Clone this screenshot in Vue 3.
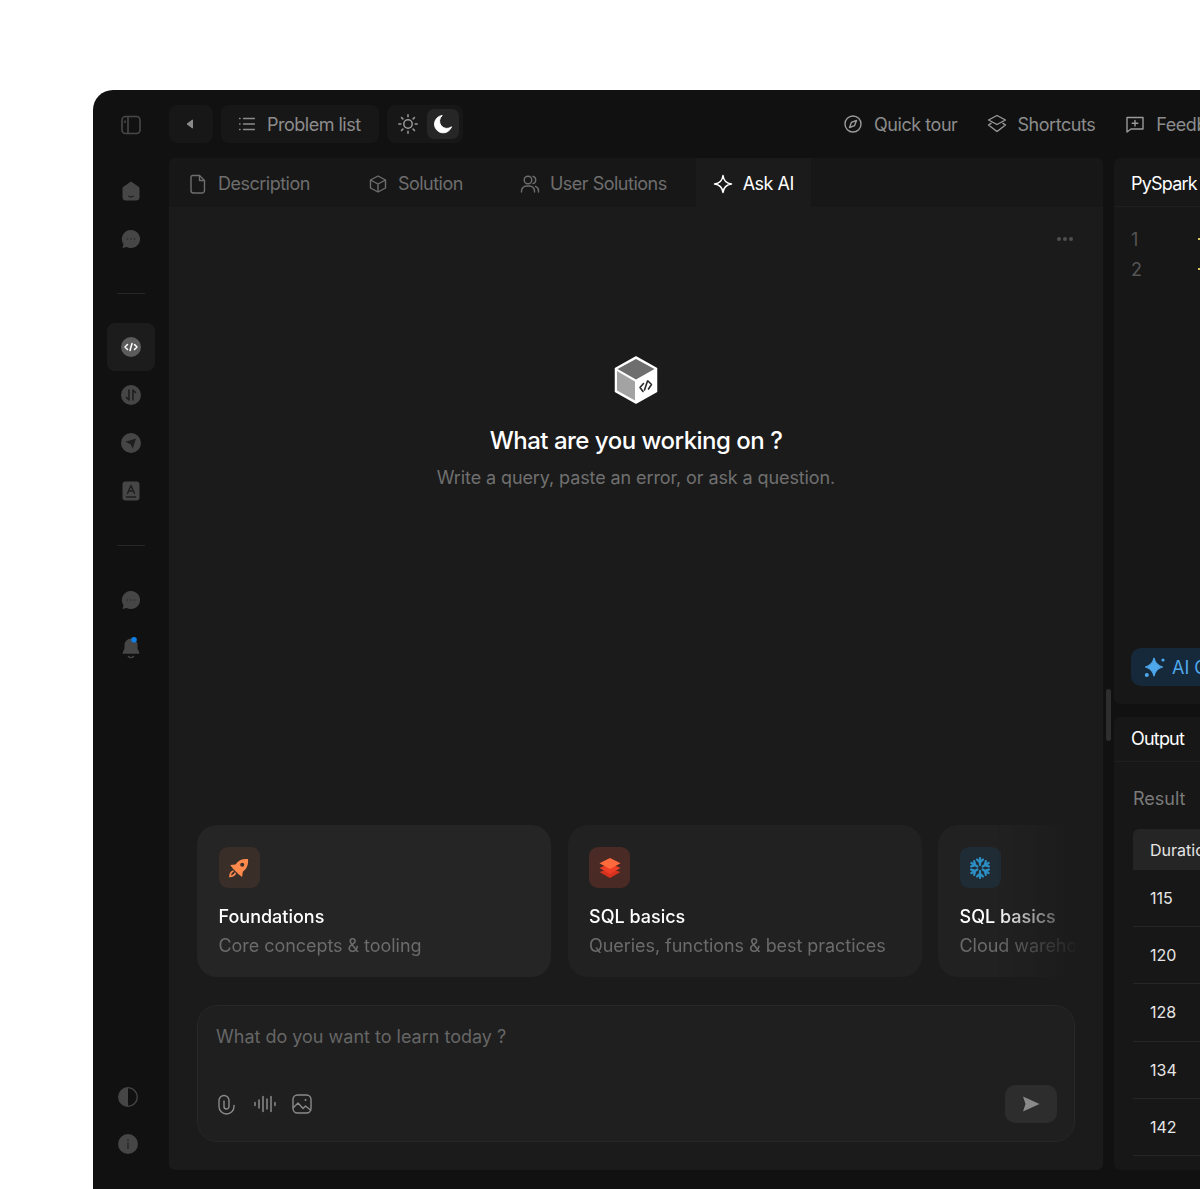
<template>
  <div class="page">
    <div class="shell">
      <!-- left rail -->
      <aside class="rail">
        <svg class="rail-toggle" width="24" height="24" viewBox="0 0 24 24" fill="none" stroke="#484848" stroke-width="1.6">
          <rect x="3" y="3.500" width="18" height="17" rx="3.500" />
          <path d="M9 3.500v17" />
          <path d="M6 7.500v2.500" />
        </svg>

        <div class="rail-group first">
          <button class="rail-btn">
            <svg width="24" height="24" viewBox="0 0 24 24">
              <path d="M12 2.500 19.600 7.800c.6.400.9 1 .9 1.700V18a3.500 3.500 0 0 1-3.500 3.500H7A3.500 3.500 0 0 1 3.500 18V9.500c0-.7.300-1.300.9-1.700Z" fill="#464646" />
              <path d="M9.800 17.200c1.300.8 3.100.8 4.400 0" fill="none" stroke="#1c1c1c" stroke-width="1.200" stroke-linecap="round" />
            </svg>
          </button>
          <button class="rail-btn">
            <svg width="24" height="24" viewBox="0 0 24 24">
              <path d="M12 3a9 9 0 1 1-4.300 16.900L3.500 21l1-3.900A9 9 0 0 1 12 3Z" fill="#464646" />
              <circle cx="8.500" cy="12" r=".8" fill="#2b2b2b" /><circle cx="12" cy="12" r=".8" fill="#2b2b2b" /><circle cx="15.500" cy="12" r=".8" fill="#2b2b2b" />
            </svg>
          </button>
        </div>

        <div class="rail-line top"></div>

        <div class="rail-group">
          <button class="rail-btn active">
            <svg width="24" height="24" viewBox="0 0 24 24">
              <circle cx="12" cy="12" r="10" fill="#5c5c5c" />
              <path d="M8.500 9.500 6 12l2.500 2.500M15.500 9.500 18 12l-2.500 2.500M13 8.500l-2 7" fill="none" stroke="#fff" stroke-width="1.500" stroke-linecap="round" stroke-linejoin="round" />
            </svg>
          </button>
          <button class="rail-btn">
            <svg width="24" height="24" viewBox="0 0 24 24">
              <circle cx="12" cy="12" r="10" fill="#464646" />
              <path d="M10 7v10l-2.500-2.500M14 17V7l2.500 2.500" fill="none" stroke="#1e1e1e" stroke-width="1.600" stroke-linecap="round" stroke-linejoin="round" />
            </svg>
          </button>
          <button class="rail-btn">
            <svg width="24" height="24" viewBox="0 0 24 24">
              <circle cx="12" cy="12" r="10" fill="#464646" />
              <path d="M6.500 10.800 17 7.500l-3.200 10.300-2.300-4.600Z" fill="#1e1e1e" />
            </svg>
          </button>
          <button class="rail-btn">
            <svg width="24" height="24" viewBox="0 0 24 24">
              <rect x="3.500" y="2.500" width="17" height="19" rx="3" fill="#464646" />
              <path d="M8.500 14.500 12 6.500l3.500 8M9.800 12h4.400M7.500 18h9" fill="none" stroke="#1e1e1e" stroke-width="1.400" stroke-linecap="round" stroke-linejoin="round" />
            </svg>
          </button>
        </div>

        <div class="rail-line bottom"></div>

        <div class="rail-group">
          <button class="rail-btn">
            <svg width="24" height="24" viewBox="0 0 24 24">
              <path d="M12 3a9 9 0 1 1-4.300 16.900L3.500 21l1-3.900A9 9 0 0 1 12 3Z" fill="#464646" />
              <circle cx="8.500" cy="12" r=".8" fill="#2b2b2b" /><circle cx="12" cy="12" r=".8" fill="#2b2b2b" /><circle cx="15.500" cy="12" r=".8" fill="#2b2b2b" />
            </svg>
          </button>
          <button class="rail-btn">
            <svg width="24" height="24" viewBox="0 0 24 24">
              <path d="M12 2.500a6.500 6.500 0 0 1 6.500 6.500v3.500l1.800 4c.3.700-.1 1.300-.8 1.300h-15c-.7 0-1.100-.6-.8-1.300l1.800-4V9A6.500 6.500 0 0 1 12 2.500Z" fill="#464646" />
              <path d="M9.500 20.500c1.300 1.300 3.700 1.300 5 0" fill="none" stroke="#464646" stroke-width="1.600" stroke-linecap="round" />
              <circle cx="15" cy="3.800" r="2.800" fill="#0f7fe6" />
            </svg>
          </button>
        </div>

        <div class="rail-foot">
          <svg width="22" height="22" viewBox="0 0 22 22">
            <circle cx="11" cy="11" r="9.300" fill="none" stroke="#464646" stroke-width="1.300" />
            <path d="M11 1.700a9.300 9.300 0 0 0 0 18.600Z" fill="#464646" />
          </svg>
          <svg width="22" height="22" viewBox="0 0 22 22">
            <circle cx="11" cy="11" r="10" fill="#464646" />
            <path d="M11 10v5.500" stroke="#262626" stroke-width="1.300" stroke-linecap="round" />
            <circle cx="11" cy="7.200" r=".9" fill="#262626" />
          </svg>
        </div>
      </aside>

      <div class="main">
        <!-- top bar -->
        <header class="topbar">
          <button class="bar-btn back">
            <svg width="10" height="12" viewBox="0 0 10 12"><path d="M7.500 2v8L2 6Z" fill="#8a8a8a" stroke="#8a8a8a" stroke-linejoin="round" /></svg>
          </button>
          <button class="bar-btn list">
            <svg width="20" height="20" viewBox="0 0 20 20" fill="none" stroke="#8a8a8a" stroke-width="1.300" stroke-linecap="round">
              <path d="M6.500 4.500h11M6.500 10h11M6.500 15.500h11M2.500 4.500h.6M2.500 10h.6M2.500 15.500h.6" />
            </svg>
            <span>Problem list</span>
          </button>
          <div class="theme">
            <span class="theme-opt">
              <svg width="22" height="22" viewBox="0 0 22 22" fill="none" stroke="#9a9a9a" stroke-width="1.500" stroke-linecap="round">
                <circle cx="11" cy="11" r="4.200" />
                <path d="M11 1.800v2M11 18.200v2M1.800 11h2M18.200 11h2M4.500 4.500l1.400 1.400M16.100 16.100l1.400 1.400M17.500 4.500l-1.400 1.400M5.900 16.100l-1.400 1.400" />
              </svg>
            </span>
            <span class="theme-opt on">
              <svg width="22" height="22" viewBox="0 0 22 22">
                <path d="M10.200 2.500a8.700 8.700 0 1 0 9.300 11.300 7.300 7.300 0 0 1-9.300-11.300Z" fill="#fff" stroke="#fff" stroke-linejoin="round" />
              </svg>
            </span>
          </div>
          <nav class="links">
            <a>
              <svg width="20" height="20" viewBox="0 0 20 20" fill="none" stroke="#9a9a9a" stroke-width="1.400" stroke-linejoin="round">
                <circle cx="10" cy="10" r="8" />
                <path d="M13.500 6.500 11.600 11.600 6.500 13.500 8.400 8.400Z" />
              </svg>
              Quick tour
            </a>
            <a class="shortcuts">
              <svg width="20" height="20" viewBox="0 0 20 20" fill="none" stroke="#9a9a9a" stroke-width="1.400" stroke-linejoin="round" stroke-linecap="round">
                <path d="M10 1.500 18.500 6 10 10.500 1.500 6Z" />
                <path d="M4 9.300 1.500 11 10 17.500 18.500 11 16 9.300" />
              </svg>
              Shortcuts
            </a>
            <a>
              <svg width="20" height="20" viewBox="0 0 20 20" fill="none" stroke="#9a9a9a" stroke-width="1.400" stroke-linejoin="round" stroke-linecap="round">
                <path d="M2 3.500h16v11.500H6L2 18Z" />
                <path d="M10 6.500v5.500M7.200 9.200h5.600" />
              </svg>
              Feedback
            </a>
          </nav>
        </header>

        <div class="panels">
          <!-- ask ai panel -->
          <section class="left">
            <div class="tabs">
              <div class="tab t-desc">
                <svg width="18" height="20" viewBox="0 0 18 20" fill="none" stroke="#6e6e6e" stroke-width="1.400" stroke-linejoin="round">
                  <path d="M3.500 1.500h7l5 5v10a2.500 2.500 0 0 1-2.500 2.500H4.500A2.500 2.500 0 0 1 2 16.500V3a1.500 1.500 0 0 1 1.500-1.500Z" />
                  <path d="M10.500 1.500v5h5" />
                </svg>
                Description
              </div>
              <div class="tab t-sol">
                <svg width="18" height="20" viewBox="0 0 18 20" fill="none" stroke="#6e6e6e" stroke-width="1.400" stroke-linejoin="round">
                  <path d="M9 2 16.500 6v8L9 18l-7.500-4V6Z" />
                  <path d="M1.500 6 9 10l7.500-4M9 10v8" />
                </svg>
                Solution
              </div>
              <div class="tab t-user">
                <svg width="20" height="20" viewBox="0 0 20 20" fill="none" stroke="#6e6e6e" stroke-width="1.400" stroke-linecap="round">
                  <circle cx="8" cy="6" r="3.800" />
                  <path d="M1.500 18v-1a5 5 0 0 1 5-5h3a5 5 0 0 1 5 5v1M13 2.300a3.800 3.800 0 0 1 0 7.300M15.500 12.300a5 5 0 0 1 3 4.700v1" />
                </svg>
                User Solutions
              </div>
              <div class="tab active">
                <svg width="20" height="20" viewBox="0 0 20 20" fill="none" stroke="#fff" stroke-width="1.500" stroke-linejoin="round">
                  <path d="M10 1.500c.6 5 3.500 7.900 8.500 8.500-5 .6-7.900 3.500-8.500 8.500-.6-5-3.500-7.900-8.500-8.500 5-.6 7.900-3.500 8.500-8.500Z" />
                </svg>
                Ask AI
              </div>
            </div>

            <div class="content">
              <div class="more"><i></i><i></i><i></i></div>

              <div class="hero">
                <svg width="44" height="48" viewBox="0 0 44 48">
                  <path d="M22 1 42.500 12.500v23L22 47 1.500 35.500v-23Z" fill="#fff" stroke="#fff" stroke-width="1.500" stroke-linejoin="round" />
                  <path d="M22 3 40.500 13 22 23.500 3.500 13Z" fill="#6e6e6e" />
                  <path d="M3 15 21 25.500v19L3 34.500Z" fill="#a3a3a3" />
                  <path d="M29.500 27.500 26 31.500l3 4M34 25l3.500 3.500-3 4.500M33.500 25l-3 9" fill="none" stroke="#2a2a2a" stroke-width="1.600" stroke-linecap="round" stroke-linejoin="round" />
                </svg>
                <h1>What are you working on ?</h1>
                <p>Write a query, paste an error, or ask a question.</p>
              </div>

              <div class="cards">
                <div class="card hovered">
                  <div class="card-icon orange">
                    <svg width="24" height="24" viewBox="0 0 20 20">
                      <path d="M17.500 2.500c.5 4.500-.8 8-4.300 10.600l-.6 4.400-3-2.300-4.600-4.600-2.300-3 4.400-.6C9.600 3.400 13 2 17.500 2.500Z" fill="#ff8a4c" />
                      <circle cx="12.700" cy="7.300" r="1.700" fill="#3a2e29" />
                      <path d="M5.500 12.500c-1.800.5-2.800 2-3 4.500 2.500-.2 4-1.200 4.500-3" fill="none" stroke="#ff8a4c" stroke-width="1.400" />
                    </svg>
                  </div>
                  <h3>Foundations</h3>
                  <p>Core concepts &amp; tooling</p>
                </div>
                <div class="card">
                  <div class="card-icon red">
                    <svg width="24" height="24" viewBox="0 0 24 24">
                      <path d="M12 12.500 22.500 16 12 22 1.500 16Z" fill="#d8321f" />
                      <path d="M12 7.500 22.500 12 12 18 1.500 12Z" fill="#ee3d26" />
                      <path d="M12 2 22.500 7.200 12 13 1.500 7.200Z" fill="#ff6a3d" />
                    </svg>
                  </div>
                  <h3>SQL basics</h3>
                  <p>Queries, functions &amp; best practices</p>
                </div>
                <div class="card">
                  <div class="card-icon blue">
                    <svg width="24" height="24" viewBox="0 0 24 24" fill="none" stroke="#2b8fc4" stroke-width="2.200" stroke-linecap="round" stroke-linejoin="round">
                      <path d="M12 9V2M9 3.500l3 3 3-3M12 15v7M9 20.500l3-3 3 3" />
                      <path d="M12 9V2M9 3.500l3 3 3-3M12 15v7M9 20.500l3-3 3 3" transform="rotate(60 12 12)" />
                      <path d="M12 9V2M9 3.500l3 3 3-3M12 15v7M9 20.500l3-3 3 3" transform="rotate(120 12 12)" />
                    </svg>
                  </div>
                  <h3>SQL basics</h3>
                  <p>Cloud warehousing</p>
                </div>
              </div>

              <div class="composer">
                <div class="placeholder">What do you want to learn today ?</div>
                <div class="composer-row">
                  <svg width="22" height="22" viewBox="0 0 22 22" fill="none" stroke="#8a8a8a" stroke-width="1.400" stroke-linecap="round">
                    <path d="M18 12.500v1a7.500 7.500 0 0 1-15 0V7.500a5 5 0 0 1 10 0v6a2.500 2.500 0 0 1-5 0V8" />
                  </svg>
                  <svg width="24" height="22" viewBox="0 0 24 22" fill="none" stroke="#8a8a8a" stroke-width="1.500" stroke-linecap="round">
                    <path d="M2 9.500v3M6 7v8M10 3.500v15M14 6v10M18 3.500v15M22 9.500v3" />
                  </svg>
                  <svg width="22" height="22" viewBox="0 0 22 22" fill="none" stroke="#8a8a8a" stroke-width="1.400" stroke-linejoin="round">
                    <rect x="2" y="2" width="18" height="18" rx="4.500" />
                    <path d="M2 15l5-5 5 5.500 2.500-2.500 5.500 4.500" />
                    <circle cx="14.500" cy="7" r="1" fill="#8a8a8a" stroke="none" />
                  </svg>
                  <button class="send">
                    <svg width="20" height="18" viewBox="0 0 20 18"><path d="M2 1.500 18.500 9 2 16.500 4.500 9Z" fill="#8a8a8a" /></svg>
                  </button>
                </div>
              </div>
            </div>
          </section>

          <div class="resizer"><span></span></div>

          <!-- editor + output -->
          <section class="right">
            <div class="editor">
              <div class="pane-head">PySpark</div>
              <div class="code">
                <div class="code-line"><span class="ln">1</span><span class="tick"></span></div>
                <div class="code-line"><span class="ln">2</span><span class="tick"></span></div>
              </div>
              <div class="ai-chip">
                <svg width="22" height="22" viewBox="0 0 22 22" fill="#4fa8ec">
                  <path d="M10 2c1 5 3.200 7.500 8.500 9-5.300 1.500-7.500 4-8.500 9-1-5-3.200-7.500-8.500-9C6.800 9.500 9 7 10 2Z" stroke="#4fa8ec" stroke-width="1.200" stroke-linejoin="round" />
                  <circle cx="19" cy="4" r="1.600" />
                  <circle cx="2.800" cy="19" r="2" />
                </svg>
                AI Copilot
              </div>
            </div>
            <div class="output">
              <div class="pane-head">Output</div>
              <div class="result-label">Result</div>
              <div class="table">
                <div class="th">Duration</div>
                <div v-for="d in durations" :key="d" class="td">{{ d }}</div>
              </div>
            </div>
          </section>
        </div>
      </div>
    </div>
  </div>
</template>

<script setup>
const durations = [115, 120, 128, 134, 142]
</script>

<style>
html, body { background: #fff; }
</style>

<style scoped>
* { box-sizing: border-box; }

.page {
  height: 1189px;
  width: 1200px;
  padding: 90px 0 0 93px;
  overflow: hidden;
  background: #fff;
  font-family: Inter, "Liberation Sans", sans-serif;
}

.shell {
  display: flex;
  width: 1107px;
  height: 1099px;
  background: #111;
  border-radius: 20px 0 0 0;
  overflow: hidden;
}

/* rail */
.rail {
  width: 76px;
  flex-shrink: 0;
  display: flex;
  flex-direction: column;
  align-items: center;
  padding: 23px 0 34px 0;
}
.rail-group { display: flex; flex-direction: column; }
.rail-group.first { margin-top: 30px; }
.rail-btn {
  width: 48px;
  height: 48px;
  display: flex;
  align-items: center;
  justify-content: center;
  border: 0;
  padding: 0;
  background: transparent;
  border-radius: 8px;
}
.rail-btn.active { background: #1c1c1c; }
.rail-line { width: 28px; height: 1px; background: #262626; }
.rail-line.top { margin: 30px 0 29px; }
.rail-line.bottom { margin: 30px 0 30px; }
.rail-foot {
  margin-top: auto;
  display: flex;
  flex-direction: column;
  gap: 25px;
  transform: translateX(-3px);
}

/* top bar */
.main { flex: 1; min-width: 0; display: flex; flex-direction: column; padding: 15px 0 19px; }
.topbar { display: flex; align-items: center; height: 38px; gap: 8px; flex-shrink: 0; width: 1107px; }
.bar-btn {
  height: 38px;
  display: flex;
  align-items: center;
  border: 0;
  background: #171717;
  border-radius: 8px;
  font: inherit;
  font-size: 18px;
  letter-spacing: -.5px;
  color: #8c8c8c;
}
.back { width: 44px; justify-content: center; padding: 0 2px 0 0; }
.list { width: 158px; padding: 0 0 0 16px; gap: 10px; }
.theme {
  display: flex;
  align-items: center;
  gap: 3px;
  width: 76px;
  height: 38px;
  padding: 3px 0 3px 4px;
  background: #171717;
  border-radius: 8px;
}
.theme-opt { width: 33px; height: 30px; display: flex; align-items: center; justify-content: center; border-radius: 7px; }
.theme-opt.on { width: 32px; background: #262626; }
.links { display: flex; gap: 30px; margin-left: 372px; white-space: nowrap; flex-shrink: 0; }
.links a { display: flex; align-items: center; gap: 11px; font-size: 18px; letter-spacing: -.45px; color: #8c8c8c; }
.links a.shortcuts { gap: 10px; }

/* panels */
.panels { flex: 1; min-height: 0; display: flex; margin-top: 15px; }
.left {
  width: 934px;
  flex-shrink: 0;
  display: flex;
  flex-direction: column;
  background: #1b1b1b;
  border-radius: 6px;
  overflow: hidden;
}
.tabs { height: 49px; display: flex; background: #171717; flex-shrink: 0; }
.tab {
  display: flex;
  align-items: center;
  gap: 11px;
  padding: 2px 17px 0;
  font-size: 18px;
  letter-spacing: -.5px;
  color: #6e6e6e;
  white-space: nowrap;
}
.t-desc { margin-left: 3px; }
.t-sol { margin-left: 25px; }
.t-user { margin-left: 23px; gap: 10px; }
.tab.active { margin-left: 12px; gap: 10px; color: #fff; background: #1b1b1b; }

.content { flex: 1; min-height: 0; display: flex; flex-direction: column; padding: 0 28px 28px; }
.more { display: flex; justify-content: flex-end; gap: 2px; padding: 30px 2px 0 0; }
.more i { width: 4px; height: 4px; border-radius: 50%; background: #4e4e4e; }
.hero { flex: 1; display: flex; flex-direction: column; align-items: center; padding-top: 115px; }
.hero h1 { margin: 22px 0 0; font-size: 24px; line-height: 30px; font-weight: 500; color: #fff; letter-spacing: -.5px; }
.hero p { margin: 9px 0 0; font-size: 18px; line-height: 26px; letter-spacing: -.1px; color: #707070; }

.cards {
  display: flex;
  gap: 16.5px;
  overflow: hidden;
  flex-shrink: 0;
  -webkit-mask-image: linear-gradient(to right, #000 calc(100% - 78px), rgba(0,0,0,.1));
  mask-image: linear-gradient(to right, #000 calc(100% - 78px), rgba(0,0,0,.1));
}
.card {
  width: 354px;
  height: 152px;
  flex-shrink: 0;
  padding: 22px 21.5px;
  background: #212121;
  border-radius: 20px;
}
.card.hovered { background: #252525; }
.card-icon { width: 41px; height: 41px; border-radius: 9px; display: flex; align-items: center; justify-content: center; }
.orange { background: #3a2e29; }
.red { background: #4a2a24; }
.blue { background: #1f2c35; }
.card h3 { margin: 16px 0 0; font-size: 18px; line-height: 26px; font-weight: 500; color: #fff; }
.card p { margin: 3px 0 0; font-size: 18px; line-height: 26px; letter-spacing: -.05px; color: #6b6b6b; white-space: nowrap; }

.composer {
  margin-top: 28px;
  height: 137px;
  flex-shrink: 0;
  padding: 18px 17px 18px 18px;
  background: #1f1f1f;
  border: 1px solid #272727;
  border-radius: 20px;
  display: flex;
  flex-direction: column;
  justify-content: space-between;
}
.placeholder { font-size: 18px; line-height: 26px; color: #666; }
.composer-row { display: flex; align-items: center; gap: 14.5px; }
.send {
  margin-left: auto;
  width: 52px;
  height: 38px;
  display: flex;
  align-items: center;
  justify-content: center;
  border: 0;
  padding: 0;
  background: #2d2d2d;
  border-radius: 10px;
}

.resizer { width: 11px; flex-shrink: 0; position: relative; }
.resizer span {
  position: absolute;
  left: 3px;
  top: 531px;
  width: 5px;
  height: 52px;
  border-radius: 3px;
  background: #2e2e2e;
}

/* right side */
.right { width: 300px; flex-shrink: 0; display: flex; flex-direction: column; gap: 13px; }
.editor { height: 546px; background: #171717; border-radius: 6px 0 0 6px; position: relative; display: flex; flex-direction: column; }
.pane-head {
  height: 49px;
  flex-shrink: 0;
  padding: 2px 0 0 17px;
  display: flex;
  align-items: center;
  font-size: 18px;
  letter-spacing: -.8px;
  color: #fff;
  border-bottom: 1px solid #1f1f1f;
}
.code { padding: 17px 0 0 17px; }
.code-line { height: 30px; display: flex; align-items: center; font-size: 18px; color: #555; }
.ln { width: 67px; }
.tick { width: 4px; height: 2px; background: #d6c75c; }
.ai-chip {
  position: absolute;
  left: 17px;
  top: 490px;
  width: 140px;
  height: 38px;
  display: flex;
  align-items: center;
  gap: 6px;
  padding-left: 13px;
  background: #15293a;
  border-radius: 10px;
  font-size: 18px;
  color: #4fa8ec;
}
.output { flex: 1; min-height: 0; background: #171717; border-radius: 6px 0 0 6px; overflow: hidden; }
.output .pane-head { height: 45px; padding: 0 0 2px 17px; }
.result-label { margin: 24px 0 0 19px; font-size: 18px; line-height: 26px; color: #7a7a7a; }
.table { margin: 17px 0 0 19px; }
.th {
  height: 41px;
  display: flex;
  align-items: center;
  padding-left: 17px;
  background: #252525;
  border-radius: 6px 0 0 0;
  font-size: 16px;
  color: #e6e6e6;
}
.td {
  height: 57.2px;
  display: flex;
  align-items: center;
  padding-left: 17px;
  border-bottom: 1px solid #262626;
  font-size: 16px;
  color: #e6e6e6;
}
</style>
